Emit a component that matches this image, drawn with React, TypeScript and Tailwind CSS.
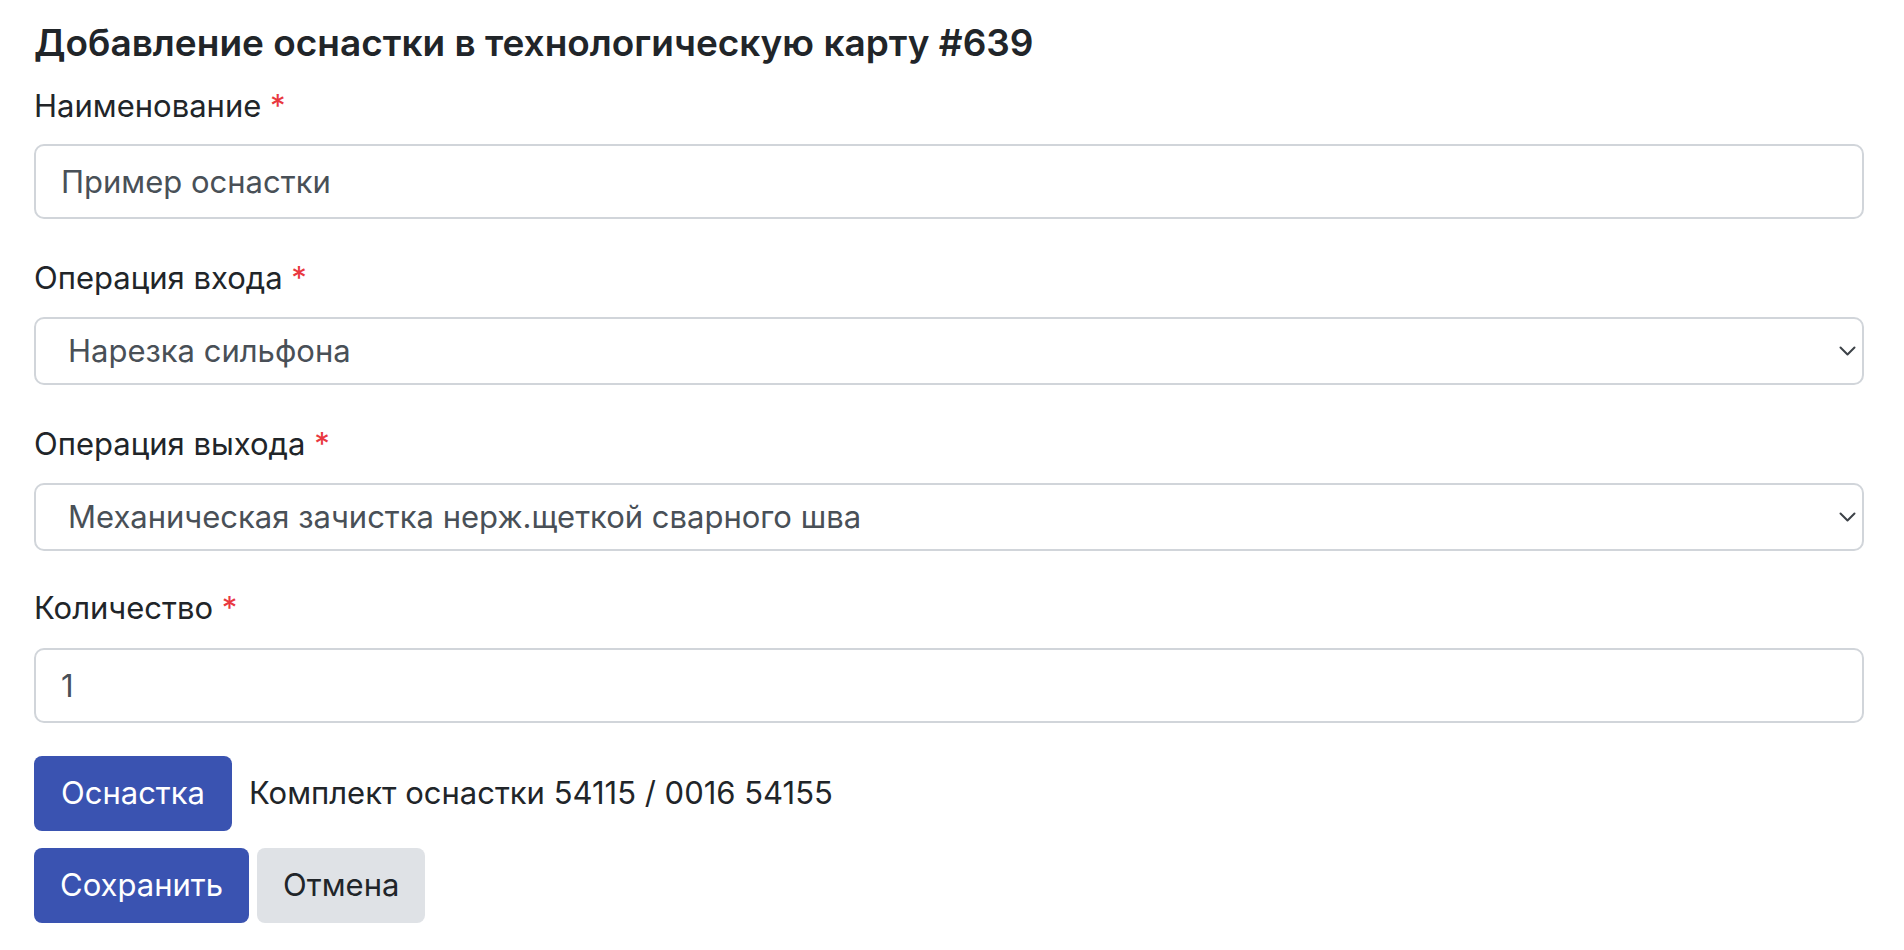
import { ChangeEvent, useState } from "react";

const operations = [
  "Нарезка сильфона",
  "Механическая зачистка нерж.щеткой сварного шва",
];

function Label({ text }: { text: string }) {
  return (
    <label className="block text-[31px] leading-[46px] text-[#212529]">
      {text} <span className="text-[#e9383f]">*</span>
    </label>
  );
}

function Chevron() {
  return (
    <svg
      className="pointer-events-none absolute right-[8px] top-1/2 -translate-y-1/2"
      width="17"
      height="10"
      viewBox="0 0 17 10"
      fill="none"
    >
      <path
        d="M1.5 1.5 L8.5 8.5 L15.5 1.5"
        stroke="#3d4248"
        strokeWidth="2"
        strokeLinecap="round"
        strokeLinejoin="round"
      />
    </svg>
  );
}

function SelectField({
  label,
  value,
  onChange,
  className,
}: {
  label: string;
  value: string;
  onChange: (v: string) => void;
  className: string;
}) {
  return (
    <div className={className}>
      <Label text={label} />
      <div className="relative mt-[16px]">
        <select
          value={value}
          onChange={(e: ChangeEvent<HTMLSelectElement>) => onChange(e.target.value)}
          className="block h-[68px] w-full appearance-none rounded-[10px] border-2 border-[#d1d5da] bg-white pl-[32px] pr-[40px] text-[31px] text-[#495057] outline-none"
        >
          {operations.map((op) => (
            <option key={op} value={op}>
              {op}
            </option>
          ))}
        </select>
        <Chevron />
      </div>
    </div>
  );
}

export default function App() {
  const [name, setName] = useState("Пример оснастки");
  const [opIn, setOpIn] = useState(operations[0]);
  const [opOut, setOpOut] = useState(operations[1]);
  const [count, setCount] = useState("1");

  return (
    <div
      className="bg-white pl-[34px] pr-[40px] pt-[21px] text-[#212529]"
      style={{ fontFamily: "Inter, 'Noto Sans', sans-serif" }}
    >
      <h4 className="mb-[18px] text-[37px] font-semibold leading-[44px]">
        Добавление оснастки в технологическую карту #639
      </h4>

      <div className="mb-[36px]">
        <Label text="Наименование" />
        <input
          value={name}
          onChange={(e) => setName(e.target.value)}
          className="mt-[15px] block h-[75px] w-full rounded-[10px] border-2 border-[#d1d5da] bg-white px-[25px] text-[31px] text-[#495057] outline-none"
        />
      </div>

      <SelectField label="Операция входа" value={opIn} onChange={setOpIn} className="mb-[36px]" />
      <SelectField label="Операция выхода" value={opOut} onChange={setOpOut} className="mb-[34px]" />

      <div className="mb-[33px]">
        <Label text="Количество" />
        <input
          value={count}
          onChange={(e) => setCount(e.target.value)}
          className="mt-[17px] block h-[75px] w-full rounded-[10px] border-2 border-[#d1d5da] bg-white px-[25px] text-[31px] text-[#495057] outline-none"
        />
      </div>

      <div className="flex items-center gap-[17px]">
        <button className="h-[75px] rounded-[8px] bg-[#3a53b1] px-[27px] text-[31px] text-white">
          Оснастка
        </button>
        <span className="text-[31px]">Комплект оснастки 54115 / 0016 54155</span>
      </div>

      <div className="mt-[17px] flex gap-[8px]">
        <button className="h-[75px] rounded-[8px] bg-[#3a53b1] px-[26px] text-[31px] text-white">
          Сохранить
        </button>
        <button className="h-[75px] rounded-[8px] bg-[#dfe2e6] px-[26px] text-[31px] text-[#212529]">
          Отмена
        </button>
      </div>
    </div>
  );
}
